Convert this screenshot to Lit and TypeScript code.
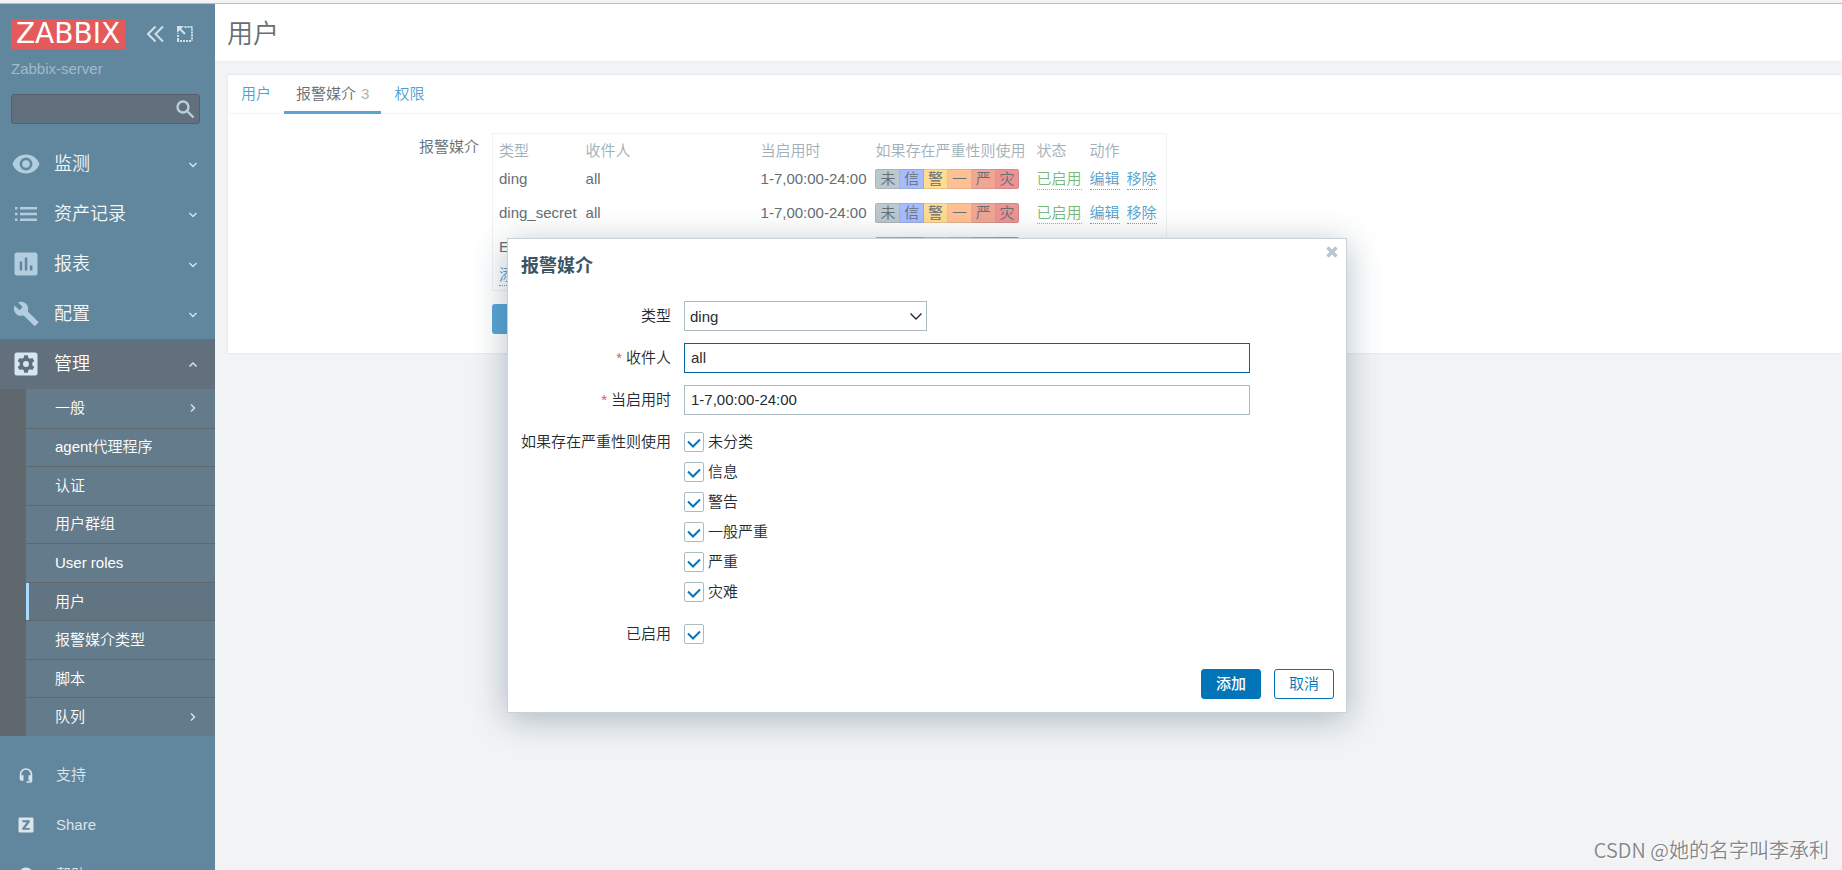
import { LitElement, html, css, svg, nothing } from "lit";
import { customElement, property } from "lit/decorators.js";

const icons: Record<string, unknown> = {
  eye: svg`<path fill-rule="evenodd" d="M14 4.500C7.800 4.500 2.600 8.300 0.500 14C2.600 19.700 7.800 23.500 14 23.500S25.400 19.700 27.500 14C25.400 8.300 20.200 4.500 14 4.500ZM14 20.400A6.400 6.400 0 1 1 14 7.600A6.400 6.400 0 0 1 14 20.400ZM14 10.200A3.800 3.800 0 1 0 14 17.800A3.800 3.800 0 0 0 14 10.200Z"/>`,
  list: svg`<path d="M3 7h2.500v2.500H3zM3 12.700h2.500v2.500H3zM3 18.400h2.500v2.500H3zM8 7h17v2.500H8zM8 12.700h17v2.500H8zM8 18.400h17v2.500H8z"/>`,
  chart: svg`<path fill-rule="evenodd" d="M5 2.500h18a2.500 2.500 0 0 1 2.500 2.500v18a2.500 2.500 0 0 1-2.500 2.500H5A2.500 2.500 0 0 1 2.500 23V5A2.500 2.500 0 0 1 5 2.500ZM7.700 11.500v9h2.500v-9zM12.800 7.500v13h2.500v-13zM17.900 15.500v5h2.500v-5z"/>`,
  wrench: svg`<path d="M25 21.600 14.800 11.400c1-2.600.4-5.600-1.700-7.700C10.900 1.500 7.600 1.100 5 2.300l4.700 4.700-3.300 3.300L1.600 5.600C.3 8.200.8 11.500 3 13.700c2.100 2.100 5.100 2.700 7.700 1.700l10.200 10.200c.5.500 1.200.5 1.600 0l2.500-2.500c.6-.4.6-1.200 0-1.500z" transform="translate(1 0)"/>`,
  gear: svg`<path fill-rule="evenodd" d="M5 2.500h18a2.500 2.500 0 0 1 2.500 2.500v18a2.500 2.500 0 0 1-2.500 2.500H5A2.500 2.500 0 0 1 2.500 23V5A2.500 2.500 0 0 1 5 2.500ZM12.200 5.300l-.5 2.500-1.700 1-2.400-.9-1.900 3.200 2 1.700v2.400l-2 1.700 1.900 3.200 2.400-.9 1.700 1 .5 2.500h3.600l.5-2.500 1.700-1 2.400.9 1.900-3.200-2-1.700v-2.400l2-1.700-1.900-3.200-2.400.9-1.700-1-.5-2.500ZM14 11a3 3 0 1 1 0 6 3 3 0 0 1 0-6Z"/>`,
  headset: svg`<path d="M14 7.200A6.300 6.300 0 0 0 7.700 13.500v4.400a1.800 1.800 0 0 0 1.800 1.800h2v-5.500H9.300v-.7a4.700 4.700 0 0 1 9.400 0v.7h-2.200v5.500h2.200v.6H14.500v1.500h4a1.800 1.800 0 0 0 1.800-1.800v-6.500A6.300 6.300 0 0 0 14 7.200Z"/>`,
  share: svg`<path fill-rule="evenodd" d="M7.700 6.500h12.600a1.200 1.200 0 0 1 1.200 1.200v12.600a1.200 1.200 0 0 1-1.200 1.200H7.700a1.200 1.200 0 0 1-1.200-1.200V7.700a1.200 1.200 0 0 1 1.200-1.200ZM10.400 9.300v1.900h4.300l-4.500 6v1.600h7.600v-1.900h-4.500l4.400-6V9.300Z"/>`,
  help: svg`<path fill-rule="evenodd" d="M14 6.500a7.500 7.500 0 1 0 0 15 7.500 7.500 0 0 0 0-15ZM13.200 17h1.600v1.600h-1.600zM14 9.500a3 3 0 0 0-3 3h1.500a1.500 1.500 0 1 1 2.300 1.200c-.9.600-1.600 1-1.600 2.300h1.500c0-1.200 2.300-1.400 2.300-3.500a3 3 0 0 0-3-3Z"/>`,
};

const chevrons: Record<string, string> = {
  down: "M2.500 5 6 8.500l3.500-3.500",
  up: "M2.500 8.500 6 5l3.500 3.500",
  right: "M4 2.500 7.500 6 4 9.500",
};

const chevron = (dir: string) =>
  html`<svg class="chevron" viewBox="0 0 12 12" aria-hidden="true"><path d=${chevrons[dir]} /></svg>`;

const base = css`
  * { box-sizing: border-box; }
  a { text-decoration: none; color: inherit; }
  button, input, select { font: inherit; color: inherit; margin: 0; }
  svg { display: block; flex: none; }
`;

@customElement("side-nav")
class SideNav extends LitElement {
  static styles = [base, css`
    :host { display: block; width: 215px; flex: none; background: #61879e; color: #f4f7f9; overflow: hidden; }
    .brand { display: flex; align-items: center; padding: 15px 21px 0 11px; }
    .logo { background: #e45959; color: #fff; font: 28px/30px "DejaVu Sans", sans-serif; width: 114px; display: flex; justify-content: center; }
    .tool { border: 0; background: none; padding: 0; margin-left: 12px; display: block; }
    .logo + .tool { margin-left: 21px; }
    .tool svg { width: 18px; height: 18px; fill: none; stroke: #d3dfe7; stroke-width: 2; }
    .server { padding: 10px 11px 0; line-height: 20px; color: #a3bac8; }
    .search { display: flex; align-items: center; margin: 15px 15px 15px 11px; height: 30px; border: 1px solid #566069; border-radius: 3px; background: #61707c; }
    .search input { flex: 1; min-width: 0; height: 28px; border: 0; background: none; outline: 0; padding: 0 6px; }
    .search button { border: 0; background: none; padding: 0 4px; }
    .search svg { width: 20px; height: 20px; fill: none; stroke: #b9cfdd; stroke-width: 2.4; }
    ul { list-style: none; margin: 0; padding: 0; }
    .item { display: flex; align-items: center; height: 50px; padding: 0 16px 0 12px; font-size: 18px; }
    .icon { width: 28px; height: 28px; fill: #b2cddd; margin-right: 14px; }
    .text { flex: 1; }
    .chevron { width: 12px; height: 12px; fill: none; stroke: #d3e1ea; stroke-width: 1.5; }
    .open { background: #61707c; color: #fff; }
    .open .icon { fill: #d5e7f3; }
    .sub { display: grid; grid-auto-rows: 1fr; height: 347px; background: #5f686d; padding-left: 26px; }
    .sub li { display: grid; border-top: 1px solid #5f686d; }
    .sub li:first-child { border-top: 0; }
    .sub a { display: flex; align-items: center; padding: 0 16px 0 29px; background: #647b8b; color: #fff; }
    .sub .current { background: #617482; box-shadow: inset 3px 0 #a8dcff; }
    .support { padding-top: 14px; }
    .support .item { font-size: 15px; color: #dbe4ea; }
    .support .icon { fill: #dbe4ea; margin-right: 16px; }
  `];

  private main = [["eye", "监测"], ["list", "资产记录"], ["chart", "报表"], ["wrench", "配置"], ["gear", "管理"]];
  private sub = ["一般", "agent代理程序", "认证", "用户群组", "User roles", "用户", "报警媒介类型", "脚本", "队列"];
  private support = [["headset", "支持"], ["share", "Share"], ["help", "帮助"]];

  render() {
    return html`
      <div class="brand">
        <a class="logo" href="#">ZABBIX</a>
        <button class="tool" aria-label="Collapse"><svg viewBox="0 0 18 18"><path d="M9.500 1.500 2 9l7.500 7.500M17 1.500 9.500 9l7.500 7.500" /></svg></button>
        <button class="tool" aria-label="Compact"><svg viewBox="0 0 18 18"><path stroke-dasharray="2 1" d="M8.500 2H17M16 3.500V16M15 16H1M2 15V8.500" /><path d="M3 3l6 6" /><path fill="#d3dfe7" stroke="none" d="M1 1h7L1 8z" /></svg></button>
      </div>
      <div class="server">Zabbix-server</div>
      <form class="search">
        <input type="text" aria-label="Search" />
        <button type="button" aria-label="Search"><svg viewBox="0 0 20 20"><circle cx="8" cy="8" r="5.500" /><path d="M12 12l6.500 6.500" /></svg></button>
      </form>
      <ul>
        ${this.main.map(([icon, name]) => html`<li>
          <a class="item ${icon === "gear" ? "open" : ""}" href="#"><svg class="icon" viewBox="0 0 28 28">${icons[icon]}</svg><span class="text">${name}</span>${chevron(icon === "gear" ? "up" : "down")}</a>
        </li>`)}
      </ul>
      <ul class="sub">
        ${this.sub.map((name) => html`<li><a class=${name === "用户" ? "current" : ""} href="#"><span class="text">${name}</span>${name === "一般" || name === "队列" ? chevron("right") : nothing}</a></li>`)}
      </ul>
      <ul class="support">
        ${this.support.map(([icon, name]) => html`<li><a class="item" href="#"><svg class="icon" viewBox="0 0 28 28">${icons[icon]}</svg><span class="text">${name}</span></a></li>`)}
      </ul>`;
  }
}

@customElement("media-table")
class MediaTable extends LitElement {
  static styles = [base, css`
    :host { display: block; border: 1px solid #f0f2f3; padding: 6px 0 4px; }
    table { border-collapse: collapse; line-height: 20px; white-space: nowrap; }
    th { font-weight: inherit; text-align: left; color: #a0b0b8; height: 22px; padding: 0 0 0 6px; }
    td { height: 34px; padding: 0 0 0 6px; }
    th + th, td + td { padding-left: 9px; }
    th:nth-child(5), td:nth-child(5) { padding-left: 11px; }
    th:nth-child(6), td:nth-child(6) { padding-left: 8px; }
    .last td { height: 22px; }
    .to { min-width: 166px; }
    .sev { display: flex; width: 144px; height: 20px; }
    .sev span { flex: 1; text-align: center; line-height: 18px; border: 1px solid rgba(90, 70, 70, 0.15); border-left-width: 0; }
    .sev span:first-child { border-radius: 2px 0 0 2px; border-left-width: 1px; }
    .sev span:last-child { border-radius: 0 2px 2px 0; }
    .s0 { background: #bbc8cd; } .s1 { background: #a5bdff; } .s2 { background: #ffdb93; }
    .s3 { background: #ffc193; } .s4 { background: #f0a693; } .s5 { background: #ed9393; }
    a { display: inline-block; line-height: 20px; color: #4f9fd0; border-bottom: 1px dotted #5aa5d4; margin-right: 7px; }
    .on { color: #78ba7c; border-color: #84c087; margin: 0; }
    td:last-child a:last-child { margin-right: 9px; }
  `];
  render() {
    return html`<table>
      <thead><tr><th>类型</th><th>收件人</th><th>当启用时</th><th>如果存在严重性则使用</th><th>状态</th><th>动作</th></tr></thead>
      <tbody>
        ${["ding", "ding_secret", "Email"].map((type) => html`<tr>
          <td>${type}</td><td><div class="to">all</div></td><td>1-7,00:00-24:00</td>
          <td><div class="sev">${[..."未信警一严灾"].map((c, i) => html`<span class="s${i}">${c}</span>`)}</div></td>
          <td><a class="on" href="#">已启用</a></td>
          <td><a href="#">编辑</a><a href="#">移除</a></td>
        </tr>`)}
        <tr class="last"><td colspan="6"><a href="#">添加</a></td></tr>
      </tbody>
    </table>`;
  }
}

@customElement("tick-box")
class TickBox extends LitElement {
  @property() label = "";
  @property() name = "";
  static styles = [base, css`
    :host { display: block; }
    label { display: flex; align-items: center; gap: 4px; height: 30px; width: max-content; }
    input { appearance: none; width: 20px; height: 20px; border: 1px solid #acbbc2; border-radius: 2px; background: #fff; grid-area: 1 / 1; }
    .box { display: grid; }
    svg { grid-area: 1 / 1; width: 20px; height: 20px; fill: none; stroke: #0275b8; stroke-width: 2; pointer-events: none; display: none; }
    input:checked + svg { display: block; }
  `];
  render() {
    return html`<label><span class="box"><input type="checkbox" checked aria-label=${this.label || this.name} /><svg viewBox="0 0 20 20"><path d="M4 9.500l5 5 7-7" /></svg></span>${this.label}</label>`;
  }
}

@customElement("media-dialog")
class MediaDialog extends LitElement {
  static styles = [base, css`
    :host { display: block; width: 840px; background: #fff; border: 1px solid #c8d2d8; color: #1f2c33; padding: 0 12px 13px 13px; box-shadow: 0 6px 32px rgba(20, 60, 80, 0.32); }
    .top { display: flex; justify-content: space-between; align-items: flex-start; height: 62px; }
    h2 { margin: 15px 0 0; font-size: 18px; line-height: 24px; font-weight: 700; color: #3c5563; }
    .close { border: 0; background: none; padding: 7px 0 0; margin-right: -4px; }
    .close svg { width: 12px; height: 12px; stroke: #b9c6cd; stroke-width: 3.500; }
    .form { display: grid; grid-template-columns: max-content 1fr; gap: 12px 13px; line-height: 30px; }
    .name { text-align: right; }
    .req::before { content: "*"; color: #e45959; margin-right: 4px; }
    .line { width: 566px; max-width: 100%; height: 30px; border: 1px solid #acbbc2; padding: 0 6px; outline: 0; background: #fff; }
    .line.active { border-color: #02659f; }
    .pick { display: grid; width: 243px; align-items: center; }
    .pick select { appearance: none; grid-area: 1 / 1; height: 30px; border: 1px solid #acbbc2; border-radius: 0; padding: 0 5px; background: #fff; outline: 0; }
    .pick svg { grid-area: 1 / 1; justify-self: end; margin-right: 4px; width: 14px; height: 14px; fill: none; stroke: #1f2c33; stroke-width: 1.400; pointer-events: none; }
    .foot { display: flex; justify-content: flex-end; gap: 13px; margin-top: 20px; }
    .btn { width: 60px; height: 30px; border: 1px solid #0275b8; border-radius: 3px; padding: 0; background: #fff; color: #0275b8; }
    .primary { background: #0275b8; color: #fff; font-weight: 500; }
  `];
  render() {
    return html`
      <div class="top"><h2>报警媒介</h2><button class="close" aria-label="Close"><svg viewBox="0 0 12 12"><path d="M1.500 1.500l9 9M10.500 1.500l-9 9" /></svg></button></div>
      <div class="form">
        <label class="name" for="type">类型</label>
        <div class="pick"><select id="type"><option>ding</option></select><svg viewBox="0 0 14 14"><path d="M1.500 4.500 7 10l5.500-5.500" /></svg></div>
        <label class="name req" for="to">收件人</label>
        <input class="line active" id="to" type="text" value="all" />
        <label class="name req" for="when">当启用时</label>
        <input class="line" id="when" type="text" value="1-7,00:00-24:00" />
        <div class="name">如果存在严重性则使用</div>
        <div>${["未分类", "信息", "警告", "一般严重", "严重", "灾难"].map((l) => html`<tick-box label=${l}></tick-box>`)}</div>
        <div class="name">已启用</div>
        <tick-box name="已启用"></tick-box>
      </div>
      <div class="foot"><button class="btn primary">添加</button><button class="btn">取消</button></div>`;
  }
}

@customElement("app-root")
class AppRoot extends LitElement {
  static styles = [base, css`
    :host { display: flex; flex-direction: column; position: relative; height: 100vh; overflow: hidden; background: #f2f3f5; color: #656e73; font: 350 15px/20px "Liberation Sans", "Noto Sans CJK SC", sans-serif; }
    .edge { flex: none; height: 4px; background: #f3f3f6; border-bottom: 1px solid #bbb; }
    .page { flex: 1; min-height: 0; display: flex; }
    main { flex: 1; min-width: 0; }
    header { background: #fff; border-bottom: 1px solid #ebedef; padding: 3px 12px 0; }
    h1 { margin: 0; font-size: 26px; line-height: 54px; font-weight: 350; }
    .panel { margin: 12px 0 0 12px; background: #fff; border: 1px solid #e9ebed; border-right: 0; padding-bottom: 19px; }
    .tabs { display: flex; gap: 1px; margin-left: 1px; border-bottom: 1px solid #f2f3f5; }
    .tab { padding: 7px 12px 0; height: 38px; line-height: 24px; color: #4f9fd0; }
    .tab.active { color: #656e73; border-bottom: 3px solid #5aa5d4; height: 39px; margin-bottom: -1px; }
    .tab span { color: #a6b5bc; margin-left: 5px; }
    .row { display: grid; grid-template-columns: 251px max-content; gap: 13px; margin-top: 19px; }
    .label { text-align: right; padding-top: 4px; }
    .save { grid-column: 2; justify-self: start; height: 30px; border: 0; border-radius: 3px; padding: 0 15px; background: #5aa5d4; color: #fff; }
    .layer { position: absolute; inset: 0; display: flex; justify-content: center; align-items: flex-start; padding: 238px 0 0 12px; }
    .mark { position: absolute; right: 13px; bottom: 6px; font-family: "Noto Sans CJK SC", sans-serif; font-size: 20px; line-height: 28px; color: #85888b; text-shadow: 1px 1px #fff; }
  `];
  render() {
    return html`
      <div class="edge"></div>
      <div class="page">
        <side-nav></side-nav>
        <main>
          <header><h1>用户</h1></header>
          <section class="panel">
            <nav class="tabs"><a class="tab" href="#">用户</a><a class="tab active" href="#">报警媒介<span>3</span></a><a class="tab" href="#">权限</a></nav>
            <div class="row">
              <div class="label">报警媒介</div>
              <media-table></media-table>
              <button class="save">更新</button>
            </div>
          </section>
        </main>
      </div>
      <div class="layer"><media-dialog role="dialog" aria-label="报警媒介"></media-dialog></div>
      <div class="mark">CSDN @她的名字叫李承利</div>`;
  }
}
